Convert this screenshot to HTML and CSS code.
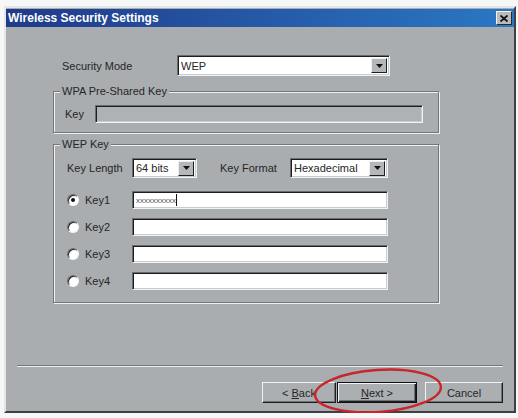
FILE: index.html
```html
<!DOCTYPE html>
<html lang="en">
<head>
  <meta charset="UTF-8">
  <title>Wireless Security Settings</title>
  <link rel="stylesheet" href="styles.css">
</head>
<body>

  <div class="window">
    <!-- Title bar -->
    <div class="titlebar">
      <span class="title">Wireless Security Settings</span>
      <span class="close-btn">
        <svg width="8" height="7" viewBox="0 0 8 7"><path d="M0.5 0.5 L7.5 6.5 M7.5 0.5 L0.5 6.5" stroke="#111" stroke-width="1.8"/></svg>
      </span>
    </div>

    <div class="dialog">
      <div class="form">
        <div class="row mode-row">
          <span class="label mode-label">Security Mode</span>
          <div class="select mode-select">
            <span class="select-text">WEP</span>
            <span class="select-btn"><svg width="7" height="4" viewBox="0 0 7 4"><path d="M0 0 H7 L3.5 4 Z" fill="#111"/></svg></span>
          </div>
        </div>

        <fieldset class="group wpa-group">
          <legend>WPA Pre-Shared Key</legend>
          <div class="group-body wpa-body">
            <div class="row">
              <span class="label wpa-label">Key</span>
              <div class="field disabled wpa-key"></div>
            </div>
          </div>
        </fieldset>

        <fieldset class="group wep-group">
          <legend>WEP Key</legend>
          <div class="group-body wep-body">
            <div class="row length-row">
              <span class="label length-label">Key Length</span>
              <div class="select length-select">
                <span class="select-text">64 bits</span>
                <span class="select-btn"><svg width="7" height="4" viewBox="0 0 7 4"><path d="M0 0 H7 L3.5 4 Z" fill="#111"/></svg></span>
              </div>
              <span class="label format-label">Key Format</span>
              <div class="select format-select">
                <span class="select-text">Hexadecimal</span>
                <span class="select-btn"><svg width="7" height="4" viewBox="0 0 7 4"><path d="M0 0 H7 L3.5 4 Z" fill="#111"/></svg></span>
              </div>
            </div>

            <div class="key-list">
              <div class="row key-row">
                <span class="key-label"><span class="radio checked"><span class="dot"></span></span>Key1</span>
                <div class="field key-field"><span class="masked">xxxxxxxxxx</span><span class="caret"></span></div>
              </div>
              <div class="row key-row">
                <span class="key-label"><span class="radio"></span>Key2</span>
                <div class="field key-field"></div>
              </div>
              <div class="row key-row">
                <span class="key-label"><span class="radio"></span>Key3</span>
                <div class="field key-field"></div>
              </div>
              <div class="row key-row">
                <span class="key-label"><span class="radio"></span>Key4</span>
                <div class="field key-field"></div>
              </div>
            </div>
          </div>
        </fieldset>
      </div>

      <div class="separator"></div>

      <!-- Bottom buttons -->
      <div class="buttons">
        <button class="btn back-btn">&lt; <u>B</u>ack</button>
        <button class="btn next-btn default"><u>N</u>ext &gt;</button>
        <button class="btn cancel-btn">Cancel</button>
      </div>
    </div>

    <!-- red marker drawn over the Next button -->
    <svg class="highlight" width="140" height="58" viewBox="0 0 140 58">
      <ellipse cx="68" cy="31" rx="63" ry="21" transform="rotate(-4 68 31)" fill="none" stroke="#c9252d" stroke-width="2.4"/>
    </svg>
  </div>

</body>
</html>
```

FILE: styles.css
```css
* {
  box-sizing: border-box;
}

body {
  margin: 0;
  background: #f6f7f7;
  font-family: 'Liberation Sans', Arial, sans-serif;
  font-size: 11px;
  color: #262626;
}

.window {
  position: relative;
  width: 512px;
  height: 407px;
  margin: 6px 0 0 4px;
  padding-top: 1px;
  border: 2px solid;
  border-color: #e4e6e8 #3e4144 #3e4144 #e4e6e8;
  background: #a9adb0;
  display: flex;
  flex-direction: column;
}

.titlebar {
  height: 18px;
  display: flex;
  align-items: center;
  justify-content: space-between;
  padding: 0 2px;
  background: linear-gradient(to right, #203a89, #2a78c4);
}

.title {
  color: #fff;
  font-weight: bold;
  font-size: 12px;
}

.close-btn {
  width: 16px;
  height: 14px;
  background: #b7bbbe;
  border: 1px solid;
  border-color: #f2f2f2 #2a2a2a #2a2a2a #f2f2f2;
  display: flex;
  align-items: center;
  justify-content: center;
}

.dialog {
  flex: 1;
  display: flex;
  flex-direction: column;
}

.form {
  padding: 28px 0 0 47px;
}

.row {
  display: flex;
  align-items: center;
}

.label {
  flex: none;
  white-space: nowrap;
}

/* Security mode */
.mode-row {
  padding-left: 9px;
  height: 21px;
}

.mode-label {
  width: 115px;
}

.select {
  display: flex;
  align-items: center;
  justify-content: space-between;
  height: 21px;
  background: #fff;
  border: 1px solid;
  border-color: #676b6f #f2f3f4 #f2f3f4 #676b6f;
  box-shadow: inset 1px 1px 0 #1e1e1e, inset -1px -1px 0 #c9cccf;
  padding: 2px 2px 2px 3px;
}

.mode-select {
  width: 213px;
}

.select-text {
  white-space: nowrap;
}

.select-btn {
  width: 16px;
  height: 15px;
  flex: none;
  display: flex;
  align-items: center;
  justify-content: center;
  background: #b4b8bb;
  border: 1px solid;
  border-color: #eceeef #1e1e1e #1e1e1e #eceeef;
}

/* Group boxes */
.group {
  width: 386px;
  margin: 0;
  padding: 0;
  min-inline-size: 0;
  border: 1px solid #73777b;
  box-shadow: inset 1px 1px 0 #eef0f1, 1px 1px 0 #eef0f1;
}

.group legend {
  margin-left: 6px;
  padding: 0 2px;
  line-height: 13px;
  background: #a9adb0;
}

.wpa-group {
  margin-top: 9px;
}

.wpa-body {
  padding: 7px 0 9px 11px;
}

.wpa-label {
  width: 30px;
}

.field {
  height: 18px;
  background: #fff;
  border: 1px solid;
  border-color: #676b6f #f2f3f4 #f2f3f4 #676b6f;
  box-shadow: inset 1px 1px 0 #1e1e1e, inset -1px -1px 0 #c9cccf;
  display: flex;
  align-items: center;
  padding-left: 3px;
}

.field.disabled {
  background: #aeb2b5;
}

.wpa-key {
  width: 328px;
}

.wep-group {
  margin-top: 5px;
}

.wep-body {
  padding: 7px 0 12px 13px;
}

.length-row {
  height: 20px;
}

.length-label {
  width: 65px;
}

.length-select {
  width: 65px;
  height: 20px;
}

.format-label {
  width: 70px;
  margin-left: 23px;
}

.format-select {
  width: 98px;
  height: 20px;
}

.key-list {
  display: flex;
  flex-direction: column;
  gap: 9px;
  margin-top: 13px;
}

.key-label {
  width: 65px;
  display: flex;
  align-items: center;
}

.radio {
  width: 12px;
  height: 12px;
  margin-right: 6px;
  border-radius: 50%;
  background: #fff;
  border: 1px solid;
  border-color: #676b6f #f4f4f4 #f4f4f4 #676b6f;
  box-shadow: inset 1px 1px 0 #222;
  display: flex;
  align-items: center;
  justify-content: center;
}

.radio .dot {
  width: 4px;
  height: 4px;
  border-radius: 50%;
  background: #111;
}

.key-field {
  width: 256px;
}

.masked {
  font-size: 8px;
  color: #555;
}

.caret {
  width: 1px;
  height: 12px;
  background: #111;
}

/* Bottom */
.separator {
  margin: auto 11px 0;
  height: 2px;
  border-top: 1px solid #73777b;
  border-bottom: 1px solid #eef0f1;
}

.buttons {
  display: flex;
  padding-left: 256px;
  margin: 15px 0 8px;
}

.btn {
  height: 21px;
  padding: 0;
  font-family: inherit;
  font-size: 11px;
  color: #262626;
  background: #abafb2;
  border: 1px solid;
  border-color: #f2f3f4 #1e1e1e #1e1e1e #f2f3f4;
  box-shadow: inset -1px -1px 0 #6f7377;
}

.back-btn {
  width: 74px;
}

.next-btn {
  width: 80px;
  margin-left: 1px;
}

.btn.default {
  border: 1px solid #111;
  box-shadow: inset 1px 1px 0 #f2f3f4, inset -1px -1px 0 #1e1e1e, inset -2px -2px 0 #6f7377;
}

.cancel-btn {
  width: 78px;
  margin-left: 8px;
}

.highlight {
  position: absolute;
  left: 304px;
  top: 352px;
}
```
